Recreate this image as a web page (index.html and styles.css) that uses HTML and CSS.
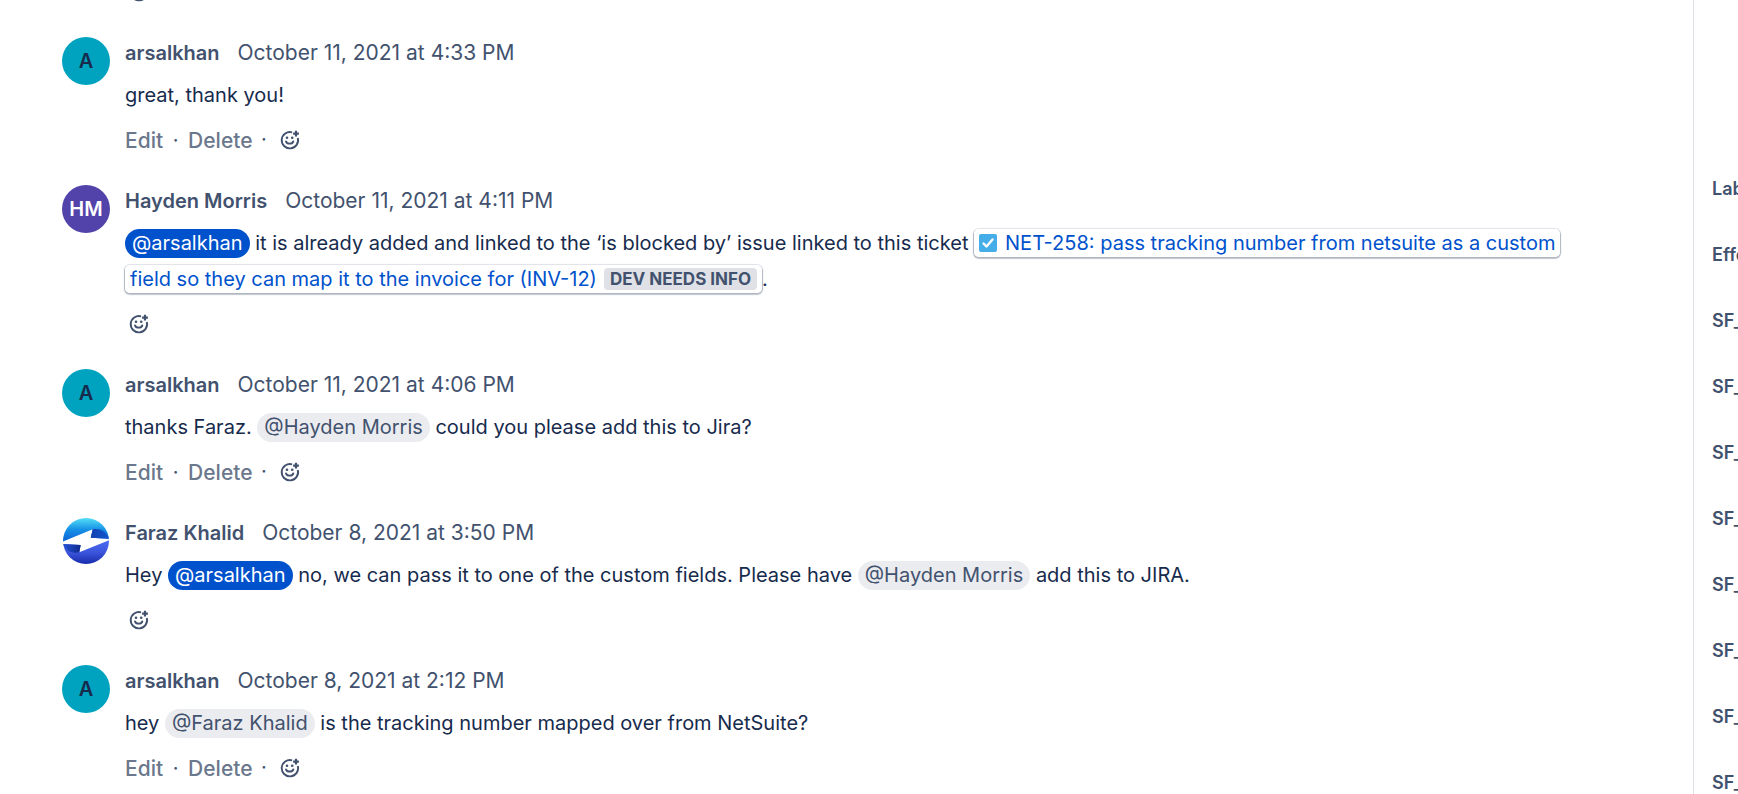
FILE: index.html
```html
<!DOCTYPE html>
<html lang="en">
<head>
<meta charset="utf-8">
<title>Issue comments</title>
<link rel="stylesheet" href="styles.css">
</head>
<body>
<svg class="defs" aria-hidden="true">
  <symbol id="react" viewBox="0 0 20 20">
    <path d="M12.1 2.3A8.2 8.2 0 1 0 17.8 8" fill="none" stroke="currentColor" stroke-width="1.900"/>
    <path d="M16 .8v5.800M13.100 3.700h5.800" fill="none" stroke="currentColor" stroke-width="2.200"/>
    <circle cx="7" cy="7.800" r="1.300" fill="currentColor"/>
    <circle cx="12.200" cy="7.800" r="1.300" fill="currentColor"/>
    <path d="M6 11.400c.9 2.900 6.400 2.900 7.300 0" fill="none" stroke="currentColor" stroke-width="1.900" stroke-linecap="round"/>
  </symbol>
</svg>
<div class="page">
  <main class="comments">
    <div class="comment previous">
      <div class="actions"><button class="react" aria-label="Add reaction"><svg><use href="#react"/></svg></button></div>
    </div>

    <article class="comment">
      <span class="avatar teal">A</span>
      <div class="content">
        <header class="meta"><strong class="author">arsalkhan</strong><time>October 11, 2021 at 4:33 PM</time></header>
        <p class="text">great, thank you!</p>
        <div class="actions"><button class="action">Edit</button><span class="dot">·</span><button class="action">Delete</button><span class="dot raised">·</span><button class="react" aria-label="Add reaction"><svg><use href="#react"/></svg></button></div>
      </div>
    </article>

    <article class="comment">
      <span class="avatar purple">HM</span>
      <div class="content">
        <header class="meta"><strong class="author">Hayden Morris</strong><time>October 11, 2021 at 4:11 PM</time></header>
        <p class="text"><span class="mention self">@arsalkhan</span> it is already added and linked to the ‘is blocked by’ issue linked to this ticket <a class="issue" href="#"><svg class="task" viewBox="0 0 18 18" aria-hidden="true"><rect width="18" height="18" rx="2" fill="#45ade8"/><path d="M4.500 9.500l3 3 6-7" fill="none" stroke="#fff" stroke-width="2.400" stroke-linecap="round" stroke-linejoin="round"/></svg>NET-258: pass tracking number from netsuite as a custom field so they can map it to the invoice for (INV-12)<span class="status">DEV NEEDS INFO</span></a>.</p>
        <div class="actions"><button class="react" aria-label="Add reaction"><svg><use href="#react"/></svg></button></div>
      </div>
    </article>

    <article class="comment">
      <span class="avatar teal">A</span>
      <div class="content">
        <header class="meta"><strong class="author">arsalkhan</strong><time>October 11, 2021 at 4:06 PM</time></header>
        <p class="text">thanks Faraz. <span class="mention">@Hayden Morris</span> could you please add this to Jira?</p>
        <div class="actions"><button class="action">Edit</button><span class="dot">·</span><button class="action">Delete</button><span class="dot raised">·</span><button class="react" aria-label="Add reaction"><svg><use href="#react"/></svg></button></div>
      </div>
    </article>

    <article class="comment">
      <span class="avatar">
        <svg viewBox="0 0 48 48" aria-hidden="true">
          <defs>
            <linearGradient id="top" x1="0" y1="0" x2="0" y2="1"><stop offset="0" stop-color="#5ae6f8"/><stop offset=".5" stop-color="#1691e6"/><stop offset="1" stop-color="#0b5fd2"/></linearGradient>
            <linearGradient id="bottom" x1="0" y1="0" x2="0" y2="1"><stop offset="0" stop-color="#4a6cf0"/><stop offset=".5" stop-color="#3c55dc"/><stop offset="1" stop-color="#1428a8"/></linearGradient>
            <linearGradient id="fold" x1="0" y1="0" x2="1" y2="0"><stop offset="0" stop-color="#1440b0"/><stop offset="1" stop-color="#1357cf"/></linearGradient>
            <linearGradient id="fold-low" x1="0" y1="0" x2="1" y2="0"><stop offset="0" stop-color="#2454d4"/><stop offset="1" stop-color="#0e2a8e"/></linearGradient>
            <clipPath id="disc"><circle cx="24" cy="24" r="23"/></clipPath>
          </defs>
          <g clip-path="url(#disc)">
            <path d="M0 0h48v21.700L28.700 20.700 30.700 12.300 0 25z" fill="url(#top)"/>
            <path d="M48 22.800L17.300 35.300 18.700 28 0 27v21h48z" fill="url(#bottom)"/>
            <path d="M30.700 12.300c7-1 14 2 16.500 9.400l-18.500-1z" fill="url(#fold)"/>
            <path d="M1 27l17.700 1-1.400 7.300C10 37 4 34 1 27z" fill="url(#fold-low)"/>
          </g>
        </svg>
      </span>
      <div class="content">
        <header class="meta"><strong class="author">Faraz Khalid</strong><time>October 8, 2021 at 3:50 PM</time></header>
        <p class="text">Hey <span class="mention self">@arsalkhan</span> no, we can pass it to one of the custom fields. Please have <span class="mention">@Hayden Morris</span> add this to JIRA.</p>
        <div class="actions"><button class="react" aria-label="Add reaction"><svg><use href="#react"/></svg></button></div>
      </div>
    </article>

    <article class="comment">
      <span class="avatar teal">A</span>
      <div class="content">
        <header class="meta"><strong class="author">arsalkhan</strong><time>October 8, 2021 at 2:12 PM</time></header>
        <p class="text">hey <span class="mention">@Faraz Khalid</span> is the tracking number mapped over from NetSuite?</p>
        <div class="actions"><button class="action">Edit</button><span class="dot">·</span><button class="action">Delete</button><span class="dot raised">·</span><button class="react" aria-label="Add reaction"><svg><use href="#react"/></svg></button></div>
      </div>
    </article>
  </main>
  <aside class="fields">
    <div>Labels</div><div>Effected</div><div>SF_</div><div>SF_</div><div>SF_</div><div>SF_</div><div>SF_</div><div>SF_</div><div>SF_</div><div>SF_</div>
  </aside>
</div>
</body>
</html>
```

FILE: styles.css
```css
* { box-sizing: border-box; }

body {
  margin: 0;
  background: #fff;
  color: #172b4d;
  font-family: Inter, "Liberation Sans", sans-serif;
  font-size: 20px;
  overflow: hidden;
}

.defs { display: none; }

.page { display: flex; height: 100vh; }

.comments {
  flex: 1;
  min-width: 0;
  display: flex;
  flex-direction: column;
  gap: 31px;
  padding: 0 96px 0 62px;
}

.comment { display: flex; gap: 15px; flex: none; }

/* Scrolled past the top edge, only its action row reaches the view. */
.previous { margin-top: -22px; padding-left: 63px; }

.content { flex: 1; min-width: 0; }

.avatar {
  flex: none;
  display: flex;
  align-items: center;
  justify-content: center;
  width: 48px;
  height: 48px;
  border-radius: 50%;
  font-weight: 600;
}
.avatar svg { width: 48px; height: 48px; }
.teal { background: #00a3bf; color: #172b4d; }
.purple { background: #5243aa; color: #fff; }

.meta {
  display: flex;
  align-items: baseline;
  gap: 18px;
  height: 32px;
  line-height: 32px;
  color: #42526e;
}
.author { font-weight: 600; }
.meta time { font-size: 21px; }

.text { margin: 8px 0 13px; line-height: 36px; }

.mention {
  padding: 2px 7px 3px;
  border-radius: 20px;
  background: #ebecf0;
  color: #42526e;
}
.self { background: #0052cc; color: #fff; }

.issue {
  padding: 2px 5px;
  border-radius: 5px;
  box-shadow: 0 1px 1px 1px rgba(9, 30, 66, .25), 0 0 1px 1px rgba(9, 30, 66, .1);
  background: #fff;
  color: #0052cc;
  text-decoration: none;
  -webkit-box-decoration-break: clone;
  box-decoration-break: clone;
}
.task { width: 18px; height: 18px; margin-right: 8px; vertical-align: -2px; }
.status {
  margin-left: 7px;
  padding: 1px 6px;
  border-radius: 4px;
  background: #dfe1e6;
  color: #42526e;
  font-size: 17px;
  font-weight: 700;
  line-height: 1;
  vertical-align: 1px;
}

.actions { display: flex; align-items: center; height: 28px; color: #42526e; }
.action {
  padding: 0;
  border: 0;
  background: none;
  color: #6b778c;
  font: inherit;
  font-size: 21px;
  font-weight: 500;
}
.dot { width: 25px; text-align: center; }
.raised { width: 23px; padding-bottom: 3px; }
.react {
  display: flex;
  padding: 0 4px;
  border: 0;
  background: none;
  color: #42526e;
}
.react svg { width: 20px; height: 20px; }

.fields {
  flex: none;
  width: 45px;
  padding: 156px 0 0 18px;
  border-left: 1px solid #dfe1e6;
  overflow: hidden;
  white-space: nowrap;
  color: #42526e;
  font-size: 18px;
  font-weight: 600;
  line-height: 66px;
}
```
